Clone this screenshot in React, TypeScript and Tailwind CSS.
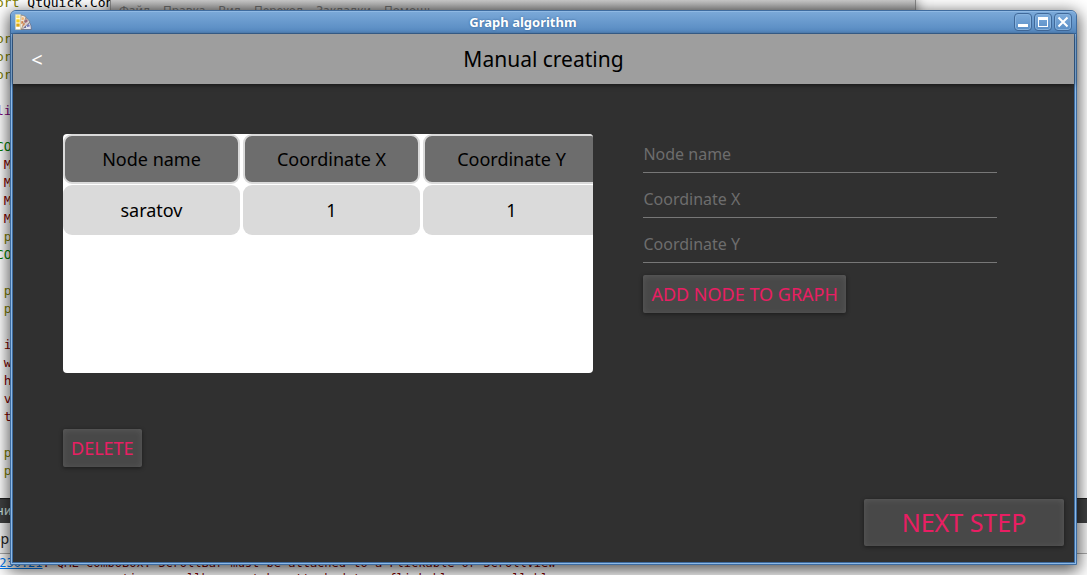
import { useState, type ReactNode } from "react";

type CodeLine = { text: string; tone: string };

const codeLines: CodeLine[] = [
  { text: "", tone: "text-black" },
  { text: "ort", tone: "text-[#808000]" },
  { text: "ort", tone: "text-[#808000]" },
  { text: "ort", tone: "text-[#808000]" },
  { text: "", tone: "text-black" },
  { text: "li", tone: "text-[#800080]" },
  { text: "", tone: "text-black" },
  { text: "CO", tone: "text-[#008000]" },
  { text: " M", tone: "text-[#800000]" },
  { text: " M", tone: "text-[#800000]" },
  { text: " M", tone: "text-[#800000]" },
  { text: " M", tone: "text-[#800000]" },
  { text: " p", tone: "text-[#808000]" },
  { text: "CO", tone: "text-[#008000]" },
  { text: "", tone: "text-black" },
  { text: " p", tone: "text-[#808000]" },
  { text: " p", tone: "text-[#808000]" },
  { text: "", tone: "text-black" },
  { text: " i", tone: "text-[#800000]" },
  { text: " w", tone: "text-[#800000]" },
  { text: " h", tone: "text-[#800000]" },
  { text: " v", tone: "text-[#800000]" },
  { text: " t", tone: "text-[#800000]" },
  { text: "", tone: "text-black" },
  { text: " p", tone: "text-[#808000]" },
  { text: " p", tone: "text-[#808000]" },
];

const menuItems = ["Файл", "Правка", "Вид", "Переход", "Закладки", "Помощь"];
const fields = ["Node name", "Coordinate X", "Coordinate Y"];
const rows = [["saratov", "1", "1"]];

function Editor() {
  return (
    <div
      aria-hidden="true"
      className="absolute inset-0 flex flex-col overflow-hidden bg-white font-['DejaVu_Sans_Mono',monospace] text-[13px]"
    >
      <div className="h-[498px] shrink-0 overflow-hidden whitespace-pre leading-[18px]">
        <div className="-mt-1.5 -ml-1">
          <span className="text-[#808000]">ort</span> QtQuick.Con
          {codeLines.map((line, i) => (
            <div key={i} className={`h-[18px] ${line.tone}`}>
              {line.text}
            </div>
          ))}
        </div>
      </div>
      <div className="h-[25px] shrink-0 border-t border-[#222222] bg-[#404142] leading-6 text-[#d0e4e0]">
        <div className="-ml-1">ни</div>
      </div>
      <div className="h-[31px] shrink-0 border-b border-[#aaaaaa] bg-[#f4f4f4] font-['Noto_Sans',sans-serif] text-sm leading-8 text-[#222222]">
        <div className="-ml-2">pp</div>
      </div>
      <div className="-ml-2 shrink-0 whitespace-pre pt-px text-xs leading-4 text-[#800000]">
        <div>
          <span className="text-[#007af4] underline">:230:21</span>: QML ComboBox: ScrollBar must be attached to a Flickable
          or ScrollView
        </div>
        <div>{"              creating scrollbar must be attached to a flickable or scrollable"}</div>
      </div>
    </div>
  );
}

function FileManager() {
  return (
    <div
      aria-hidden="true"
      className="absolute top-0 left-[110px] flex h-16 w-[806px] gap-[13px] border-x border-[#888888] bg-linear-to-b from-[#cccccc] to-[#999999] to-[12px] px-2 pt-[3px] font-['Noto_Sans',sans-serif] text-xs text-[#666666] shadow-[0_0_12px_rgba(0,0,0,0.6)]"
    >
      {menuItems.map((item) => (
        <span key={item}>{item}</span>
      ))}
    </div>
  );
}

function SwatchIcon() {
  return (
    <svg width="17" height="16" viewBox="0 0 17 16" aria-hidden="true">
      <path d="M5 15.500 14.500 8.500q2 3 1.800 7z" fill="#e4e4ee" stroke="#55566a" strokeWidth=".6" />
      <path d="M5 15.500 10.500 3.500q3 1.500 4.500 4.500L7 15.500z" fill="#d8cfd0" stroke="#77706a" strokeWidth=".6" />
      <path d="M5 15 6 1q3 .5 5 2L6.500 15z" fill="#f3e8d8" stroke="#8a7460" strokeWidth=".6" />
      <path d="M.5.5h5v15h-5z" fill="#fff" stroke="#d9cfa8" strokeWidth=".6" />
      <path d="M1.300 1.300h3.400v3H1.300z" fill="#fbe66a" />
      <path d="M1.300 5.300h3.400v3.200H1.300z" fill="#f7cf1e" />
      <path d="M1.300 9.500h3.400v3.200H1.300z" fill="#dba813" />
      <path d="m6.800 3 2.600.8-1 2.400-2-.5z" fill="#f4b877" />
      <path d="m6.500 7 1.800.6-1 2.500-1-.3z" fill="#c96f30" />
      <path d="m11 5 2 2-2.200 2-1.500-1.300z" fill="#9a6677" />
      <path d="m9 8.800 1.200 1.200-2 2-.8-.8z" fill="#d58a54" />
      <path d="m13.800 10 1.200 2.200-2.800.8-.6-1.600z" fill="#6f74bb" />
      <path d="m10.600 12 .6 1.400-2.400.9z" fill="#434a83" />
    </svg>
  );
}

function TitleButton({ label, children }: { label: string; children: ReactNode }) {
  return (
    <button
      type="button"
      aria-label={label}
      className="flex size-[18px] items-center justify-center rounded-[4px] border border-[#40699a] bg-linear-to-b from-[#7eacdc] to-[#5b8fc6] shadow-[inset_0_0_0_1px_#86b2de]"
    >
      <svg width="12" height="12" viewBox="0 0 12 12" aria-hidden="true">
        {children}
      </svg>
    </button>
  );
}

function RaisedButton({ className, children }: { className: string; children: ReactNode }) {
  return (
    <button
      type="button"
      className={`rounded-[2px] bg-[#484848] text-[#e91e63] shadow-[0_1px_4px_rgba(0,0,0,0.45),inset_0_1px_6px_rgba(255,255,255,0.1)] ${className}`}
    >
      {children}
    </button>
  );
}

export default function App() {
  const [values, setValues] = useState(["", "", ""]);

  return (
    <div className="relative flex min-h-screen overflow-hidden p-[10px] font-['Noto_Sans',sans-serif]">
      <Editor />
      <FileManager />
      <div className="relative flex grow flex-col rounded-t-[6px] border border-[#3f6c9f] bg-[#8bb9e8] shadow-[0_4px_16px_2px_rgba(0,0,0,0.65)]">
        <div className="flex h-[23px] shrink-0 items-center rounded-t-[5px] border-t border-b border-t-[#8fb9e4] border-b-[#3f6c9f] bg-linear-to-b from-[#7aa8d8] to-[#5589c0] px-1 pb-px">
          <SwatchIcon />
          <h1 className="grow text-center text-[13px] leading-5 font-bold text-white [text-shadow:0_0_2px_#2d5c92]">
            Graph algorithm
          </h1>
          <div className="flex gap-[2px]">
            <TitleButton label="Minimize">
              <path d="M1 8h10v3H1z" fill="#fff" />
            </TitleButton>
            <TitleButton label="Maximize">
              <path d="M1 1h10v10H1zM2 4v6h8V4z" fill="#fff" fillRule="evenodd" />
            </TitleButton>
            <TitleButton label="Close">
              <path d="m1.500 1.500 9 9m0-9-9 9" fill="none" stroke="#fff" strokeWidth="2" />
            </TitleButton>
          </div>
        </div>
        <div className="mx-px mb-px flex grow flex-col border border-t-0 border-[#3f6c9f] bg-[#303030]">
          <header className="grid h-[50px] shrink-0 grid-cols-[1fr_auto_1fr] items-center bg-[#9e9e9e] pt-[2px] shadow-[0_1px_5px_rgba(0,0,0,0.6)]">
            <button type="button" aria-label="Back" className="w-12 text-center text-xl text-white">
              &lt;
            </button>
            <h2 className="text-[21px] text-black">Manual creating</h2>
          </header>
          <main className="flex grow flex-col px-[10px] pb-4">
            <div className="flex gap-[50px] pt-[50px] pr-[67px] pl-10">
              <div className="h-[239px] min-w-0 flex-[3] overflow-hidden rounded-[4px] bg-white">
                <table className="w-[540px] table-fixed border-separate border-spacing-0 text-lg text-black">
                  <thead>
                    <tr>
                      {fields.map((name) => (
                        <th key={name} scope="col" className="p-0 pr-[3px] pb-px font-normal">
                          <div className="flex h-[50px] items-center justify-center rounded-[9px] border-2 border-[#dadada] bg-[#6d6d6d]">
                            {name}
                          </div>
                        </th>
                      ))}
                    </tr>
                  </thead>
                  <tbody>
                    {rows.map((row) => (
                      <tr key={row[0]}>
                        {row.map((cell, i) => (
                          <td key={i} className="p-0 pr-[3px]">
                            <div className="flex h-[50px] items-center justify-center rounded-[9px] bg-[#dadada]">{cell}</div>
                          </td>
                        ))}
                      </tr>
                    ))}
                  </tbody>
                </table>
              </div>
              <form className="flex min-w-0 flex-[2] flex-col items-start pt-[2px]">
                {fields.map((name, i) => (
                  <input
                    key={name}
                    aria-label={name}
                    placeholder={name}
                    value={values[i]}
                    onChange={(e) => setValues(values.map((v, j) => (j === i ? e.target.value : v)))}
                    className="mb-2 h-[37px] w-full border-b border-[#777777] text-base text-white outline-none placeholder:text-[#6d6d6d]"
                  />
                ))}
                <RaisedButton className="mt-1 h-[38px] px-2 text-lg">ADD NODE TO GRAPH</RaisedButton>
              </form>
            </div>
            <div className="mt-14 pl-10">
              <RaisedButton className="h-[38px] px-2 text-lg">DELETE</RaisedButton>
            </div>
            <RaisedButton className="mt-auto h-[47px] w-[200px] self-end text-[25px]">NEXT STEP</RaisedButton>
          </main>
        </div>
      </div>
    </div>
  );
}
